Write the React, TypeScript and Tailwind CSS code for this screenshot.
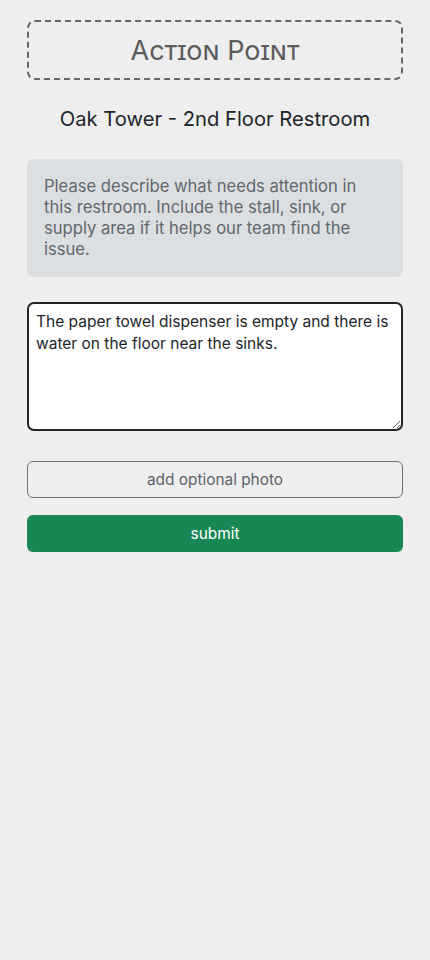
import React from "react";

const font = { fontFamily: "Inter, 'Noto Sans', sans-serif" };

export default function App() {
  return (
    <div className="min-h-[960px] bg-[#eeeeee] px-[27px] pt-[20px] text-[#212529]" style={font}>
      <header className="flex h-[60px] items-center justify-center rounded-[8px] border-2 border-dashed border-[#666666]">
        <h1 className="text-[27px] leading-none text-[#5b5b5b] [font-variant:small-caps]">Action Point</h1>
      </header>

      <h2 className="mt-[26px] text-center text-[20.2px] leading-[26px]">Oak Tower - 2nd Floor Restroom</h2>

      <div className="mt-[27px] rounded-[6px] bg-[#dcdfe2] p-[17px] text-[16.6px] leading-[21px] text-[#61676d]">
        Please describe what needs attention in this restroom. Include the stall, sink, or supply area if it helps our team find the issue.
      </div>

      <textarea
        className="mt-[25px] block h-[129px] w-full rounded-[7px] border-2 border-[#212529] bg-white px-[7px] py-[7px] text-[15.5px] leading-[22px] text-[#212529] outline-none"
        defaultValue="The paper towel dispenser is empty and there is water on the floor near the sinks."
      />

      <div className="mt-[30px] flex flex-col gap-[17px]">
        <button
          type="button"
          className="h-[37px] w-full rounded-[6px] border border-[#6c757d] text-[15.4px] text-[#5c636a]"
        >
          add optional photo
        </button>
        <button
          type="button"
          className="h-[37px] w-full rounded-[6px] bg-[#198754] text-[15.4px] text-white"
        >
          submit
        </button>
      </div>
    </div>
  );
}
